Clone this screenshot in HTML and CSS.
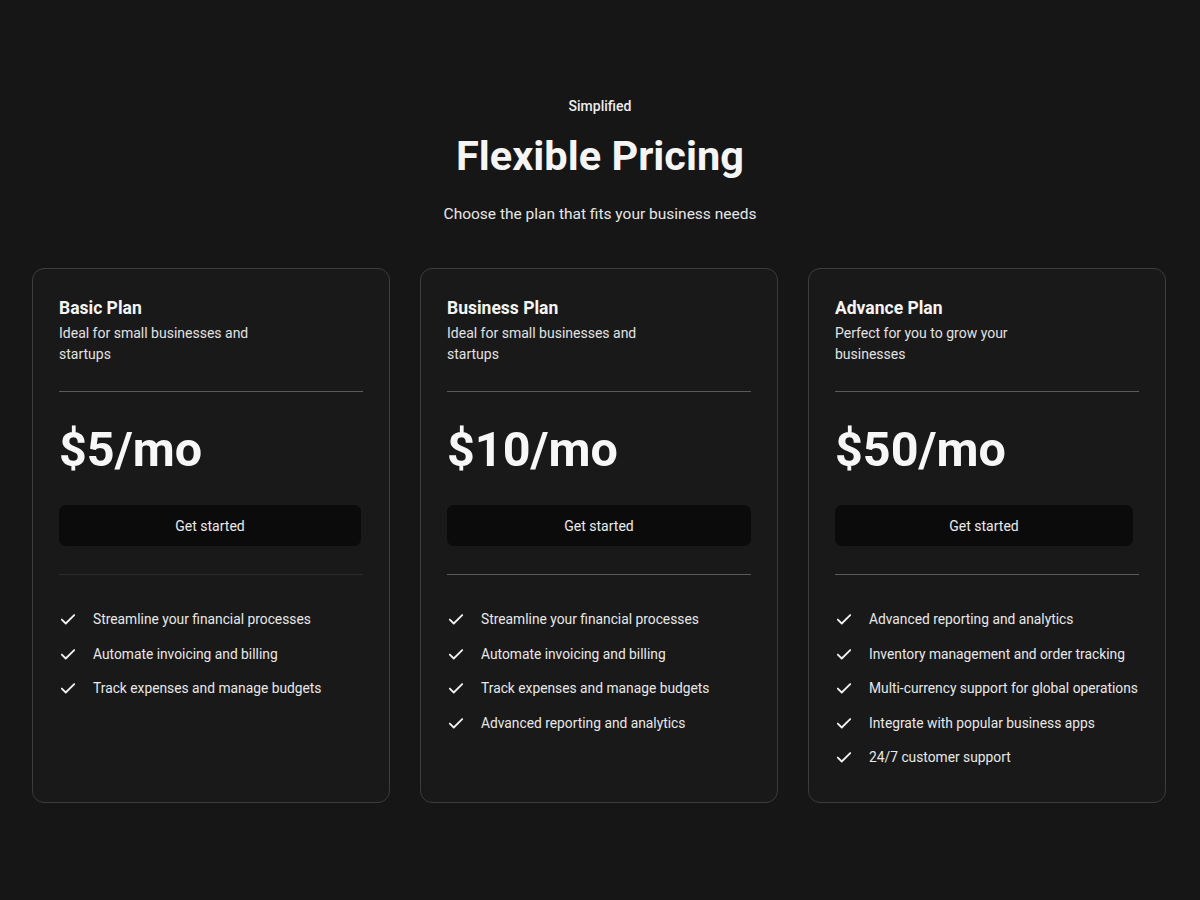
FILE: index.html
```html
<!DOCTYPE html>
<html lang="en">
<head>
<meta charset="utf-8">
<title>Flexible Pricing</title>
<link rel="stylesheet" href="styles.css">
</head>
<body>
<main class="page">
  <header class="intro">
    <p class="eyebrow">Simplified</p>
    <h1 class="title">Flexible Pricing</h1>
    <p class="lead">Choose the plan that fits your business needs</p>
  </header>

  <section class="plans">
    <article class="card">
      <div class="card-head">
        <h2 class="plan-name">Basic Plan</h2>
        <p class="plan-desc">Ideal for small businesses and startups</p>
      </div>
      <hr class="rule">
      <div class="price">$5/mo</div>
      <button class="cta">Get started</button>
      <hr class="rule rule-dark">
      <ul class="features">
        <li><svg class="check" viewBox="0 0 16 16"><path d="M2.5 8.5 L6 12 L13.5 4.5"/></svg>Streamline your financial processes</li>
        <li><svg class="check" viewBox="0 0 16 16"><path d="M2.5 8.5 L6 12 L13.5 4.5"/></svg>Automate invoicing and billing</li>
        <li><svg class="check" viewBox="0 0 16 16"><path d="M2.5 8.5 L6 12 L13.5 4.5"/></svg>Track expenses and manage budgets</li>
      </ul>
    </article>

    <article class="card">
      <div class="card-head">
        <h2 class="plan-name">Business Plan</h2>
        <p class="plan-desc">Ideal for small businesses and startups</p>
      </div>
      <hr class="rule">
      <div class="price">$10/mo</div>
      <button class="cta">Get started</button>
      <hr class="rule">
      <ul class="features">
        <li><svg class="check" viewBox="0 0 16 16"><path d="M2.5 8.5 L6 12 L13.5 4.5"/></svg>Streamline your financial processes</li>
        <li><svg class="check" viewBox="0 0 16 16"><path d="M2.5 8.5 L6 12 L13.5 4.5"/></svg>Automate invoicing and billing</li>
        <li><svg class="check" viewBox="0 0 16 16"><path d="M2.5 8.5 L6 12 L13.5 4.5"/></svg>Track expenses and manage budgets</li>
        <li><svg class="check" viewBox="0 0 16 16"><path d="M2.5 8.5 L6 12 L13.5 4.5"/></svg>Advanced reporting and analytics</li>
      </ul>
    </article>

    <article class="card">
      <div class="card-head">
        <h2 class="plan-name">Advance Plan</h2>
        <p class="plan-desc">Perfect for you to grow your businesses</p>
      </div>
      <hr class="rule">
      <div class="price">$50/mo</div>
      <button class="cta cta-narrow">Get started</button>
      <hr class="rule">
      <ul class="features">
        <li><svg class="check" viewBox="0 0 16 16"><path d="M2.5 8.5 L6 12 L13.5 4.5"/></svg>Advanced reporting and analytics</li>
        <li><svg class="check" viewBox="0 0 16 16"><path d="M2.5 8.5 L6 12 L13.5 4.5"/></svg>Inventory management and order tracking</li>
        <li><svg class="check" viewBox="0 0 16 16"><path d="M2.5 8.5 L6 12 L13.5 4.5"/></svg>Multi-currency support for global operations</li>
        <li><svg class="check" viewBox="0 0 16 16"><path d="M2.5 8.5 L6 12 L13.5 4.5"/></svg>Integrate with popular business apps</li>
        <li><svg class="check" viewBox="0 0 16 16"><path d="M2.5 8.5 L6 12 L13.5 4.5"/></svg>24/7 customer support</li>
      </ul>
    </article>
  </section>
</main>
</body>
</html>
```

FILE: styles.css
```css
* { box-sizing: border-box; }

html, body {
  margin: 0;
  padding: 0;
  background: #161616;
  color: #f4f4f4;
  font-family: Roboto, "Liberation Sans", Arial, sans-serif;
}

.page {
  width: 1200px;
  height: 900px;
  padding: 97px 32px 0;
}

.intro {
  text-align: center;
}

.eyebrow {
  margin: 0;
  font-size: 14px;
  font-weight: 500;
  line-height: 18px;
  color: #ededed;
}

.title {
  margin: 17px 0 0;
  font-size: 41.5px;
  font-weight: 700;
  line-height: 48px;
  color: #f5f5f5;
}

.lead {
  margin: 24px 0 0;
  font-size: 15.5px;
  line-height: 20px;
  color: #e6e6e6;
}

.plans {
  display: grid;
  grid-template-columns: repeat(3, 358px);
  gap: 30px;
  margin-top: 44px;
}

.card {
  height: 535px;
  background: #191919;
  border: 1px solid #3c3c3c;
  border-radius: 12px;
  padding: 27px 26px 0;
  display: flex;
  flex-direction: column;
}

.plan-name {
  margin: 0;
  font-size: 17.5px;
  font-weight: 700;
  line-height: 24px;
  color: #f5f5f5;
}

.plan-desc {
  margin: 3px 0 0;
  max-width: 200px;
  font-size: 14px;
  line-height: 21px;
  color: #e2e2e2;
}

.rule {
  border: 0;
  height: 1px;
  background: #5a5a5a;
  margin: 0;
  width: 304px;
}

.card-head + .rule {
  margin-top: 26px;
}

.rule-dark {
  background: #2a2a2a;
}

.price {
  margin-top: 30px;
  font-size: 48.5px;
  font-weight: 700;
  line-height: 56px;
  color: #f7f7f7;
}

.cta {
  margin-top: 27px;
  width: 304px;
  height: 41px;
  border: 0;
  border-radius: 7px;
  background: #0b0b0b;
  color: #ececec;
  font-family: inherit;
  font-size: 14px;
  cursor: pointer;
}

.card:first-child .cta { width: 302px; }
.cta-narrow { width: 298px; }

.cta + .rule {
  margin-top: 28px;
}

.features {
  list-style: none;
  margin: 34px 0 0;
  padding: 0;
  display: flex;
  flex-direction: column;
  gap: 14.5px;
}

.features li {
  display: flex;
  align-items: center;
  gap: 16px;
  font-size: 13.8px;
  line-height: 20px;
  color: #e8e8e8;
  white-space: nowrap;
}

.check {
  width: 18px;
  height: 18px;
  flex: none;
  fill: none;
  stroke: #f2f2f2;
  stroke-width: 1.6;
  stroke-linecap: round;
  stroke-linejoin: round;
}
```
